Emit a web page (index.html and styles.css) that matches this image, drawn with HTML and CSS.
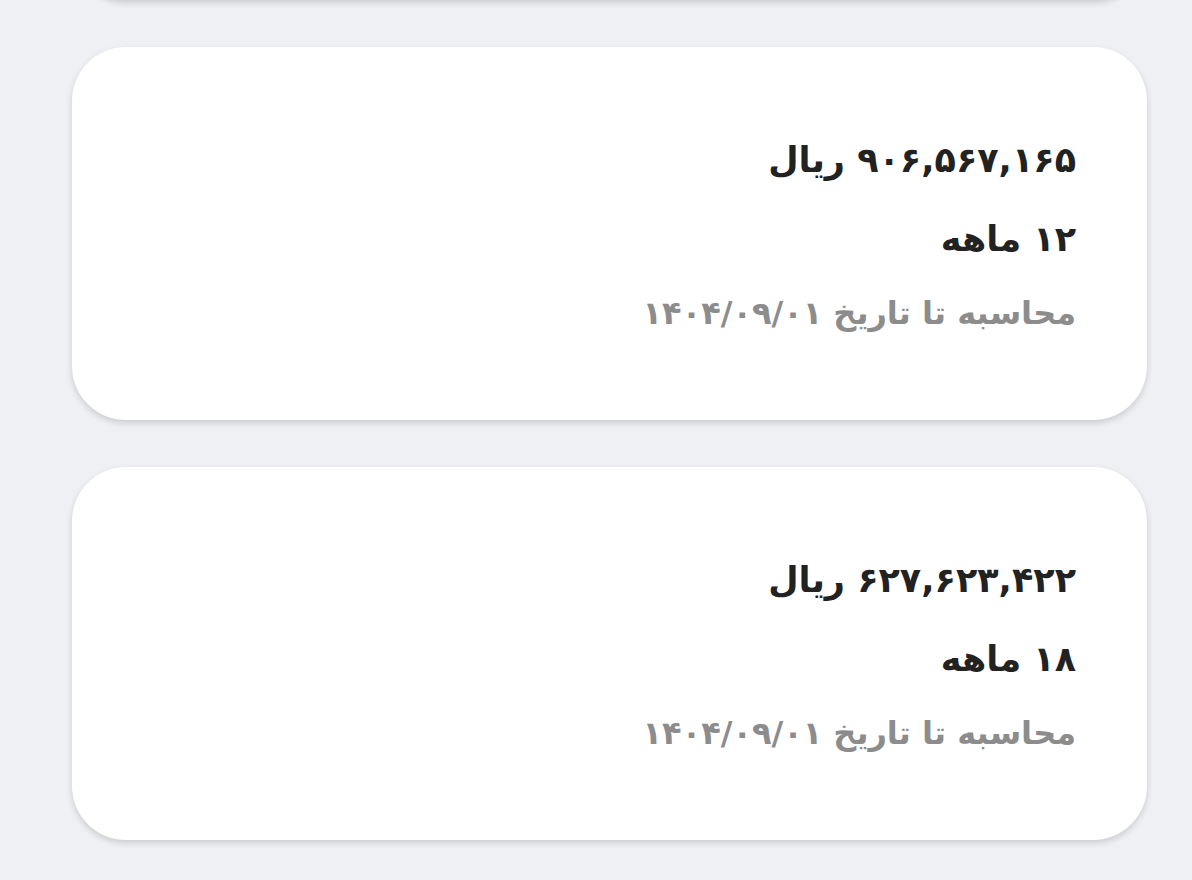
FILE: index.html
```html
<!DOCTYPE html>
<html lang="fa" dir="rtl">
<head>
  <meta charset="UTF-8" />
  <meta name="viewport" content="width=device-width, initial-scale=1.0" />
  <title>اقساط</title>
  <link rel="stylesheet" href="styles.css">
</head>
<body>
  <div class="plans">
    <!-- previous plan, scrolled above the viewport -->
    <div class="plan-card"></div>
    <div class="plan-card">
      <div class="plan-amount">۹۰۶,۵۶۷,۱۶۵ ریال</div>
      <div class="plan-months">۱۲ ماهه</div>
      <div class="plan-note">محاسبه تا تاریخ ۱۴۰۴/۰۹/۰۱</div>
    </div>
    <div class="plan-card">
      <div class="plan-amount">۶۲۷,۶۲۳,۴۲۲ ریال</div>
      <div class="plan-months">۱۸ ماهه</div>
      <div class="plan-note">محاسبه تا تاریخ ۱۴۰۴/۰۹/۰۱</div>
    </div>
  </div>
</body>
</html>
```

FILE: styles.css
```css
body {
  margin: 0;
  padding: 0;
  height: 100vh;
  background: #eff0f4;
  font-family: 'DejaVu Sans', 'Noto Sans', sans-serif;
  overflow: hidden;
}

.plans {
  display: flex;
  flex-direction: column;
  gap: 47px;
  padding: 0 45px 0 72px;
  margin-top: -373px;
}

.plan-card {
  height: 373px;
  box-sizing: border-box;
  background: #ffffff;
  border-radius: 54px;
  box-shadow: 0 3px 6px rgba(0, 0, 0, 0.15);
  padding: 0 71px;
  display: flex;
  flex-direction: column;
  justify-content: center;
  text-align: right;
}

.plan-amount {
  font-size: 35px;
  font-weight: bold;
  color: #222222;
  line-height: 80px;
}

.plan-months {
  font-size: 35px;
  font-weight: bold;
  color: #222222;
  line-height: 78px;
}

.plan-note {
  font-size: 32px;
  font-weight: bold;
  color: #8c8c8c;
  line-height: 70px;
}
```
